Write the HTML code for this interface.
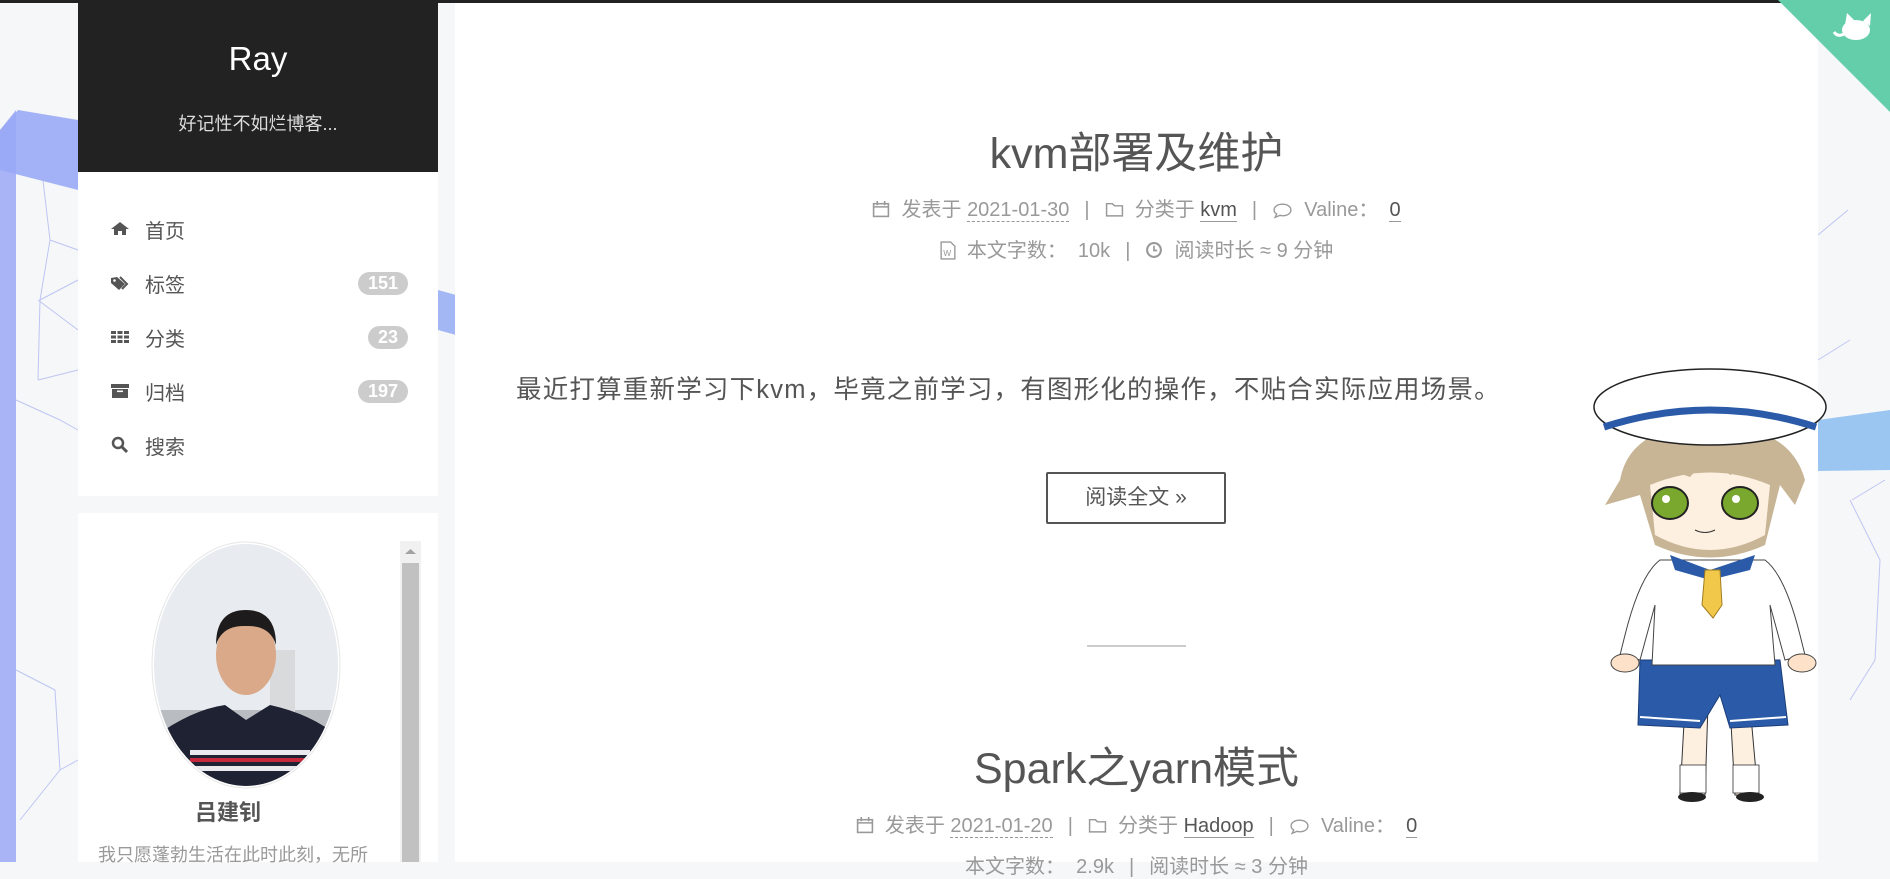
<!DOCTYPE html>
<html><head><meta charset="utf-8">
<style>
*{margin:0;padding:0;box-sizing:border-box}
body{width:1890px;height:862px;overflow:hidden;background:#f5f7f9;font-family:"Liberation Sans","Noto Sans CJK SC",sans-serif;color:#555;position:relative}
.abs{position:absolute}
.topline{left:0;top:0;width:1890px;height:3px;background:#222}
.side-h{left:78px;top:0;width:360px;height:172px;background:#222;color:#fff;text-align:center}
.side-h .t{position:absolute;top:40px;left:0;width:100%;font-size:33px}
.side-h .s{position:absolute;top:110px;left:0;width:100%;font-size:18px;color:#ddd}
.menu{left:78px;top:172px;width:360px;height:324px;background:#fff}
.mi{position:absolute;left:0;width:360px;height:40px;font-size:20px;color:#555}
.mi .ic{position:absolute;left:32px;top:10px;width:20px;height:20px}
.mi .tx{position:absolute;left:67px;top:6px}
.badge{position:absolute;right:30px;top:9px;height:23px;padding:0 10px;border-radius:12px;background:#ccc;color:#fff;font-weight:bold;font-size:18px;line-height:23px}
.box2{left:78px;top:513px;width:360px;height:349px;background:#fff}
.main{left:455px;top:3px;width:1363px;height:859px;background:#fff}
.title{left:455px;width:1363px;text-align:center;font-size:43px;color:#555}
.meta{left:455px;width:1363px;text-align:center;font-size:20px;color:#999}
.meta u{text-decoration:none;border-bottom:1px dashed #999;color:#999}
.meta b{font-weight:normal;color:#555;border-bottom:1px solid #999}
.sep{margin:0 15px}
</style></head><body>
<svg class="abs" style="left:0;top:0" width="1890" height="862">
<polygon points="0,130 18,110 78,120 78,190 0,170" fill="#8fa0f5" opacity=".8"/>
<polygon points="0,130 16,110 16,862 0,862" fill="#9aa8f6" opacity=".85"/>
<polygon points="438,290 456,295 456,335 438,330" fill="#8ea6f4" opacity=".8"/>
<polygon points="1818,420 1890,410 1890,470 1818,471" fill="#9cc6f2"/>
<g stroke="#a8b0f0" stroke-width="1" fill="none" opacity=".7">
<polyline points="18,150 42,172 50,240 40,300 38,380"/>
<polyline points="50,240 78,250"/><polyline points="40,300 78,280"/>
<polyline points="38,300 78,330"/><polyline points="38,380 78,370"/>
<polyline points="16,400 60,420 78,430"/>
<polyline points="16,670 55,690 60,770 20,820"/><polyline points="60,770 78,760"/>
<polyline points="1818,235 1848,210"/><polyline points="1850,340 1818,360"/>
<polyline points="1852,500 1885,480"/><polyline points="1850,500 1880,560 1875,660 1850,700"/>
</g>
</svg>
<div class="abs topline"></div>
<div class="abs side-h"><div class="t">Ray</div><div class="s">好记性不如烂博客...</div></div>
<div class="abs menu">
<div class="mi" style="top:37px"><svg class="ic" viewBox="0 0 20 20"><path d="M1 10L10 3L19 10H16V16H12V12H8V16H4V10Z" fill="#555"/></svg><span class="tx">首页</span></div>
<div class="mi" style="top:91px"><svg class="ic" viewBox="0 0 20 20"><path d="M1 5V10L9 17L15 11L7 4Z" fill="#555"/><path d="M10 4L17 11L12 16" stroke="#555" stroke-width="2" fill="none"/><circle cx="4.5" cy="7.5" r="1.3" fill="#fff"/></svg><span class="tx">标签</span><span class="badge">151</span></div>
<div class="mi" style="top:145px"><svg class="ic" viewBox="0 0 20 20"><g fill="#555"><rect x="1" y="4" width="5" height="3"/><rect x="7.5" y="4" width="5" height="3"/><rect x="14" y="4" width="5" height="3"/><rect x="1" y="8.5" width="5" height="3"/><rect x="7.5" y="8.5" width="5" height="3"/><rect x="14" y="8.5" width="5" height="3"/><rect x="1" y="13" width="5" height="3"/><rect x="7.5" y="13" width="5" height="3"/><rect x="14" y="13" width="5" height="3"/></g></svg><span class="tx">分类</span><span class="badge">23</span></div>
<div class="mi" style="top:199px"><svg class="ic" viewBox="0 0 20 20"><rect x="1" y="3" width="18" height="4" fill="#555"/><rect x="2" y="8" width="16" height="9" fill="#555"/><rect x="7" y="9.5" width="6" height="1.6" fill="#fff"/></svg><span class="tx">归档</span><span class="badge">197</span></div>
<div class="mi" style="top:253px"><svg class="ic" viewBox="0 0 20 20"><circle cx="8" cy="8" r="5" stroke="#555" stroke-width="2.5" fill="none"/><path d="M12 12L17 17" stroke="#555" stroke-width="3"/></svg><span class="tx">搜索</span></div>
</div>
<div class="abs box2">
<div class="abs" style="left:322px;top:28px;width:21px;height:321px;background:#f1f1f1"></div>
<div class="abs" style="left:324px;top:50px;width:17px;height:299px;background:#c1c1c1"></div>
<svg class="abs" style="left:326px;top:34px" width="13" height="8"><path d="M1 7L6.5 2L12 7Z" fill="#a3a3a3"/></svg>
<svg class="abs" style="left:72px;top:27px" width="192" height="250">
<defs><clipPath id="c"><ellipse cx="96" cy="125" rx="92" ry="121"/></clipPath></defs>
<ellipse cx="96" cy="125" rx="94" ry="123" fill="#fff" stroke="#e6e6e6"/>
<g clip-path="url(#c)">
<rect width="192" height="250" fill="#e8ecf1"/>
<rect x="0" y="170" width="192" height="40" fill="#b9bcc0"/>
<rect x="120" y="110" width="25" height="70" fill="#d9dadc"/>
<path d="M0 200Q40 170 75 165L96 180L120 165Q165 175 192 200V250H0Z" fill="#1f2233"/>
<rect x="40" y="210" width="120" height="5" fill="#e9e9ee"/>
<rect x="40" y="218" width="120" height="4" fill="#c4283a"/>
<rect x="40" y="226" width="120" height="5" fill="#e9e9ee"/>
<ellipse cx="96" cy="115" rx="30" ry="40" fill="#d9a98a"/>
<path d="M66 105Q66 70 96 70Q126 70 126 105Q120 85 96 86Q72 85 66 105Z" fill="#1d1b1b"/>
</g></svg>
<div class="abs" style="left:0;top:282px;width:300px;text-align:center;font-size:22px;font-weight:bold;color:#555">吕建钊</div>
<div class="abs" style="left:20px;top:328px;width:300px;font-size:18px;color:#999;white-space:nowrap;overflow:hidden">我只愿蓬勃生活在此时此刻，无所</div>
</div>
<div class="abs main"></div>
<div class="abs title" style="top:119px">kvm部署及维护</div>
<div class="abs meta" style="top:193px">
<svg width="18" height="18" viewBox="0 0 17 17" style="vertical-align:-2px"><rect x="1.5" y="3.5" width="14" height="12" fill="none" stroke="#999" stroke-width="1.5"/><path d="M5 1V5M12 1V5M1.5 6.5H15.5" stroke="#999" stroke-width="1.5"/></svg>&nbsp; 发表于 <u>2021-01-30</u><span class="sep">|</span><svg width="19" height="17" viewBox="0 0 18 16" style="vertical-align:-2px"><path d="M1.5 2.5H7L9 4.5H16.5V14H1.5Z" fill="none" stroke="#999" stroke-width="1.4"/></svg>&nbsp; 分类于 <b>kvm</b><span class="sep">|</span><svg width="21" height="17" viewBox="0 0 20 16" style="vertical-align:-3px"><path d="M10 2C5 2 2 4.5 2 7.5C2 9.3 3 10.5 4.5 11.3L3 14.5L7.5 12.6C8.3 12.8 9.1 13 10 13C15 13 18 10.5 18 7.5C18 4.5 15 2 10 2Z" fill="none" stroke="#999" stroke-width="1.3"/></svg>&nbsp; Valine：&nbsp;&nbsp;<b>0</b>
</div>
<div class="abs meta" style="top:234px">
<svg width="16" height="19" viewBox="0 0 15 18" style="vertical-align:-3px"><path d="M1 1H10L14 5V17H1Z" fill="none" stroke="#999" stroke-width="1.3"/><text x="3" y="14" font-size="8" fill="#999" font-family="Liberation Sans">W</text></svg>&nbsp; 本文字数：&nbsp;&nbsp;10k<span class="sep">|</span><svg width="18" height="18" viewBox="0 0 17 17" style="vertical-align:-2px"><circle cx="8.5" cy="8.5" r="6.5" fill="none" stroke="#999" stroke-width="2"/><path d="M8.5 4.5V9H11.5" stroke="#999" stroke-width="1.6" fill="none"/></svg>&nbsp; 阅读时长 ≈ 9 分钟
</div>
<div class="abs" style="left:516px;top:369px;font-size:25.5px;letter-spacing:1.2px;color:#555;white-space:nowrap">最近打算重新学习下kvm，毕竟之前学习，有图形化的操作，不贴合实际应用场景。</div>
<div class="abs" style="left:1046px;top:472px;width:180px;height:52px;border:2px solid #555;border-radius:2px;text-align:center;line-height:47px;font-size:21px;color:#555">阅读全文 »</div>
<div class="abs" style="left:1087px;top:645px;width:99px;height:2px;background:#ccc"></div>
<div class="abs title" style="top:734px">Spark之yarn模式</div>
<div class="abs meta" style="top:809px">
<svg width="18" height="18" viewBox="0 0 17 17" style="vertical-align:-2px"><rect x="1.5" y="3.5" width="14" height="12" fill="none" stroke="#999" stroke-width="1.5"/><path d="M5 1V5M12 1V5M1.5 6.5H15.5" stroke="#999" stroke-width="1.5"/></svg>&nbsp; 发表于 <u>2021-01-20</u><span class="sep">|</span><svg width="19" height="17" viewBox="0 0 18 16" style="vertical-align:-2px"><path d="M1.5 2.5H7L9 4.5H16.5V14H1.5Z" fill="none" stroke="#999" stroke-width="1.4"/></svg>&nbsp; 分类于 <b>Hadoop</b><span class="sep">|</span><svg width="21" height="17" viewBox="0 0 20 16" style="vertical-align:-3px"><path d="M10 2C5 2 2 4.5 2 7.5C2 9.3 3 10.5 4.5 11.3L3 14.5L7.5 12.6C8.3 12.8 9.1 13 10 13C15 13 18 10.5 18 7.5C18 4.5 15 2 10 2Z" fill="none" stroke="#999" stroke-width="1.3"/></svg>&nbsp; Valine：&nbsp;&nbsp;<b>0</b>
</div>
<div class="abs meta" style="top:850px">本文字数：&nbsp;&nbsp;2.9k<span class="sep">|</span>阅读时长 ≈ 3 分钟</div>
<svg class="abs" style="left:1778px;top:0" width="112" height="112" viewBox="0 0 112 112">
<path d="M0 0H112V112Z" fill="#64ceaa"/>
<g fill="#fff"><ellipse cx="78" cy="30" rx="14" ry="10"/><path d="M67 25L69 13L77 21Z M85 21L93 13L92 26Z"/><path d="M68 33Q60 38 56 32" stroke="#fff" stroke-width="3" fill="none"/></g>
</svg>
<svg class="abs" style="left:1580px;top:365px" width="260" height="450" viewBox="0 0 260 450">
<path d="M105 340L100 430H125L128 340Z M150 340L155 430H178L170 340Z" fill="#fdf0e0" stroke="#333" stroke-width="1"/>
<rect x="100" y="400" width="26" height="28" fill="#fff" stroke="#333" stroke-width=".8"/>
<rect x="153" y="400" width="26" height="28" fill="#fff" stroke="#333" stroke-width=".8"/>
<ellipse cx="112" cy="432" rx="14" ry="5" fill="#222"/><ellipse cx="170" cy="432" rx="14" ry="5" fill="#222"/>
<path d="M60 295L200 295L208 360L150 363L140 330L120 363L58 360Z" fill="#2a5aa8" stroke="#1c3e78"/>
<path d="M60 352L120 356M150 356L206 352" stroke="#fff" stroke-width="2"/>
<path d="M80 195Q60 210 45 270L40 290L60 295L75 240L72 300H195L190 240L205 295L225 290L220 270Q205 210 185 195Z" fill="#fff" stroke="#444" stroke-width="1"/>
<ellipse cx="45" cy="298" rx="14" ry="9" fill="#fde1c8" stroke="#444"/><ellipse cx="222" cy="298" rx="14" ry="9" fill="#fde1c8" stroke="#444"/>
<path d="M90 190L130 205L175 190L170 205L130 215L95 205Z" fill="#2a5aa8"/>
<path d="M125 205H140L142 240L133 253L122 240Z" fill="#f2c84b" stroke="#a07d20"/>
<path d="M40 115Q50 60 130 60Q210 60 225 115L215 140L200 120L185 180Q130 205 75 180L60 130L25 140Z" fill="#c8b596"/>
<path d="M70 120Q130 95 190 120L185 170Q130 200 75 170Z" fill="#fdf0e0"/>
<path d="M60 120Q80 80 130 78Q180 80 200 120Q170 100 150 110L130 90L110 112Q80 100 60 120Z" fill="#c8b596"/>
<ellipse cx="90" cy="138" rx="18" ry="16" fill="#7aa82e" stroke="#222" stroke-width="2"/>
<ellipse cx="160" cy="138" rx="18" ry="16" fill="#7aa82e" stroke="#222" stroke-width="2"/>
<circle cx="86" cy="134" r="4" fill="#fff"/><circle cx="156" cy="134" r="4" fill="#fff"/>
<path d="M115 165Q125 170 135 165" stroke="#333" fill="none"/>
<ellipse cx="130" cy="42" rx="116" ry="38" fill="#fff" stroke="#222" stroke-width="1.5"/>
<path d="M24 62Q130 28 236 62" stroke="#2a5aa8" stroke-width="7" fill="none"/>
</svg>
</body></html>
